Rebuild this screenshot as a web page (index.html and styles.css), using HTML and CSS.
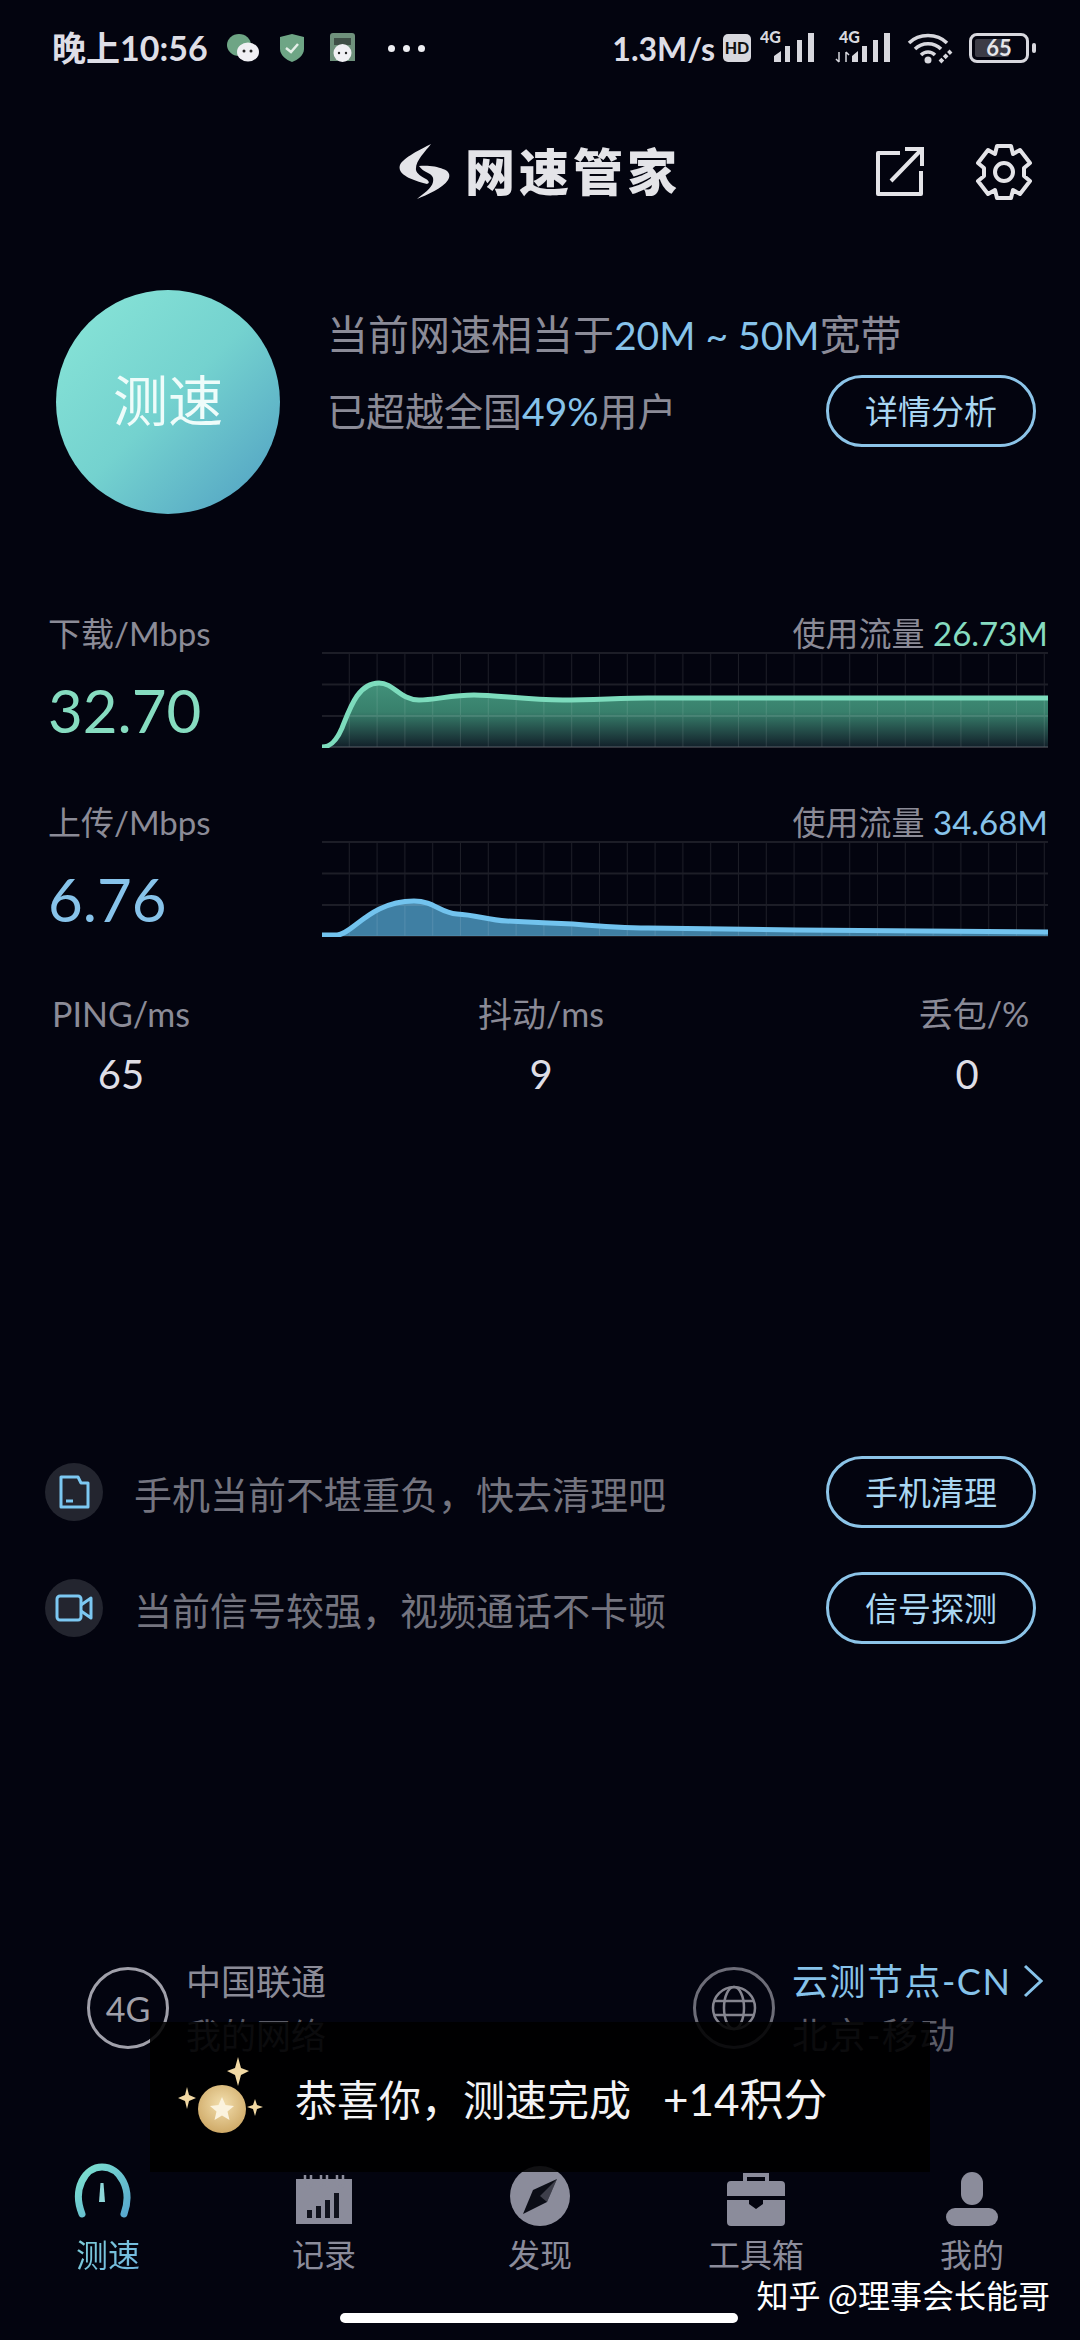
FILE: index.html
```html
<!DOCTYPE html>
<html>
<head>
    <title>网速管家</title>
    <link rel="stylesheet" href="styles.css">
</head>
<body>
<div class="phone">
    <!-- Status bar -->
    <div class="status-bar">
        <div class="status-left">
            <span class="time">晚上10:56</span>
            <svg class="st-wechat" width="34" height="30" viewBox="0 0 34 30">
                <ellipse cx="13" cy="12" rx="12" ry="11" fill="#6ea585"/>
                <ellipse cx="22" cy="19" rx="11" ry="9.500" fill="#f0f0f4"/>
                <circle cx="18" cy="18" r="1.500" fill="#222"/>
                <circle cx="25" cy="18" r="1.500" fill="#222"/>
            </svg>
            <svg class="st-shield" width="24" height="28" viewBox="0 0 24 28">
                <path d="M0 3 12 0 24 3V15C24 21 18 26 12 28 6 26 0 21 0 15Z" fill="#6ea585"/>
                <path d="M6 14 11 18 18 10" fill="none" stroke="#e4efe8" stroke-width="2.500"/>
            </svg>
            <svg class="st-face" width="25" height="30" viewBox="0 0 25 30">
                <path d="M3 0H22Q25 0 25 3V28H0V3Q0 0 3 0Z" fill="#6f917c"/>
                <rect x="4" y="5" width="17" height="7" fill="#3f4f47"/>
                <circle cx="12.500" cy="20" r="9" fill="#f0f0f4"/>
                <circle cx="9" cy="20" r="1.200" fill="#222"/>
                <circle cx="16" cy="20" r="1.200" fill="#222"/>
            </svg>
            <div class="dots"><i></i><i></i><i></i></div>
        </div>
        <div class="status-right">
            <span class="net-speed">1.3M/s</span>
            <span class="hd">HD</span>
            <svg width="55" height="44" viewBox="0 0 55 44" class="st-sig">
                <text x="0" y="17" class="sig-text">4G</text>
                <path d="M14 36V30L21 25V36ZM25 36V20H30V36ZM37 36V14H42V36ZM48 36V7H54V36Z" fill="#d8d8de"/>
            </svg>
            <svg width="56" height="44" viewBox="0 0 56 44" class="st-sig2">
                <text x="4" y="17" class="sig-text">4G</text>
                <path d="M4 36V26M1 33 4 36M11 36V26M14 29 11 26" stroke="#d8d8de" stroke-width="1.500" fill="none"/>
                <path d="M17 36V30L23 25V36ZM27 36V20H32V36ZM38 36V14H43V36ZM49 36V7H55V36Z" fill="#d8d8de"/>
            </svg>
            <svg width="48" height="32" viewBox="0 0 48 32" class="st-wifi">
                <path d="M2 11C12 1 30 1 40 11M8 17C15 10 27 10 34 17M14 23C18 19 24 19 28 23" fill="none" stroke="#d8d8de" stroke-width="3.500"/>
                <circle cx="21" cy="28" r="3.500" fill="#d8d8de"/>
                <path d="M33 30 44 19" stroke="#d8d8de" stroke-width="4" stroke-dasharray="4 2" fill="none"/>
            </svg>
            <div class="battery">
                <div class="battery-body"><span class="battery-fill"></span><span class="battery-num">65</span></div>
                <div class="battery-nub"></div>
            </div>
        </div>
    </div>

    <!-- Header -->
    <div class="header">
        <svg class="logo-mark" width="52" height="56" viewBox="0 0 52 56">
            <path d="M32 0C22 5 4 14 1 21 -1 27 4 31 10 34 17 37 23 39 28 40 31 39 30 37 27 35 22 32 18 30 17 26 16 17 26 8 32 0Z" fill="#e4e4e8"/>
            <path d="M20 22C27 21 38 22 44 25 50 27 52 31 49 36 44 44 28 51 18 55 24 50 33 44 34 38 35 33 33 31 29 29 25 27 22 25 20 22Z" fill="#e4e4e8"/>
        </svg>
        <span class="logo-text">网速管家</span>
        <svg class="share-icon" width="50" height="50" viewBox="0 0 50 50">
            <path d="M25 6H3V47H46V24" fill="none" stroke="#e4e4e8" stroke-width="4" stroke-linejoin="round"/>
            <path d="M16 34 46 3M30 2H47V19" fill="none" stroke="#e4e4e8" stroke-width="4"/>
        </svg>
        <svg class="gear-icon" width="58" height="58" viewBox="0 0 58 58">
            <path d="M22 3H36L38 11 45 7 55 20 49 25V33L55 38 45 51 38 47 36 55H22L20 47 13 51 3 38 9 33V25L3 20 13 7 20 11Z" fill="none" stroke="#e4e4e8" stroke-width="4" stroke-linejoin="round"/>
            <circle cx="29" cy="29" r="9" fill="none" stroke="#e4e4e8" stroke-width="4"/>
        </svg>
    </div>

    <!-- Speed test button and summary -->
    <div class="hero">
        <div class="test-btn">测速</div>
        <div class="hero-info">
            <div class="hero-line">当前网速相当于<span class="blue hero-range">20M ~ 50M</span>宽带</div>
            <div class="hero-row">
                <div class="hero-line hero-line-small">已超越全国<span class="blue">49%</span>用户</div>
                <div class="pill">详情分析</div>
            </div>
        </div>
    </div>

    <!-- Download -->
    <div class="speed-row">
        <div class="speed-left">
            <div class="speed-label">下载/Mbps</div>
            <div class="speed-value green">32.70</div>
        </div>
        <div class="speed-right">
            <div class="usage">使用流量 <span class="green">26.73M</span></div>
            <svg class="chart" width="726" height="96" viewBox="0 0 726 96">
                <defs>
                    <pattern id="gridA" width="27.800" height="31.500" patternUnits="userSpaceOnUse">
                        <path d="M27.800 0V31.500M0 1H27.800" fill="none" stroke="#fff" stroke-opacity="0.100" stroke-width="2"/>
                    </pattern>
                    <linearGradient id="fillGreen" x1="0" y1="0" x2="0" y2="1">
                        <stop offset="0" stop-color="#42917a"/>
                        <stop offset="0.450" stop-color="#38806c"/>
                        <stop offset="1" stop-color="#12202a"/>
                    </linearGradient>
                </defs>
                <path d="M0 95C8 95 14 90 20 76 28 56 36 31 57 31 72 31 78 48 97 48 112 48 130 43 152 43 175 43 205 48 241 48 270 48 300 46 326 46H726V95Z" fill="url(#fillGreen)"/>
                <rect width="726" height="96" fill="url(#gridA)"/>
                <path d="M0 95H726" stroke="#fff" stroke-opacity="0.100" stroke-width="2"/>
                <path d="M0 95C8 95 14 90 20 76 28 56 36 31 57 31 72 31 78 48 97 48 112 48 130 43 152 43 175 43 205 48 241 48 270 48 300 46 326 46H726" fill="none" stroke="#7ddcbd" stroke-width="5"/>
            </svg>
        </div>
    </div>

    <!-- Upload -->
    <div class="speed-row">
        <div class="speed-left">
            <div class="speed-label">上传/Mbps</div>
            <div class="speed-value blue">6.76</div>
        </div>
        <div class="speed-right">
            <div class="usage">使用流量 <span class="blue">34.68M</span></div>
            <svg class="chart" width="726" height="96" viewBox="0 0 726 96">
                <defs>
                    <pattern id="gridB" width="27.800" height="31.500" patternUnits="userSpaceOnUse">
                        <path d="M27.800 0V31.500M0 1H27.800" fill="none" stroke="#fff" stroke-opacity="0.100" stroke-width="2"/>
                    </pattern>
                </defs>
                <path d="M0 94H15C30 94 48 60 92 60 112 60 118 72 135 73 155 74 165 79 185 80 205 81 230 82 251 83 275 85 300 87 326 87L475 89 726 91V95H0Z" fill="#3f7fa3"/>
                <rect width="726" height="96" fill="url(#gridB)"/>
                <path d="M0 94H15C30 94 48 60 92 60 112 60 118 72 135 73 155 74 165 79 185 80 205 81 230 82 251 83 275 85 300 87 326 87L475 89 726 91" fill="none" stroke="#72c3ee" stroke-width="5"/>
            </svg>
        </div>
    </div>

    <!-- Ping, jitter, packet loss -->
    <div class="stats">
        <div class="stat"><div class="stat-label">PING/ms</div><div class="stat-value">65</div></div>
        <div class="stat stat-mid"><div class="stat-label">抖动/ms</div><div class="stat-value">9</div></div>
        <div class="stat"><div class="stat-label stat-label-right">丢包/%</div><div class="stat-value">0</div></div>
    </div>

    <!-- Tips -->
    <div class="tips">
        <div class="tip">
            <div class="tip-icon">
                <svg width="34" height="36" viewBox="0 0 34 36">
                    <path d="M4 3H21L24 9H31V33H4Z" fill="none" stroke="#7cc8f2" stroke-width="3" stroke-linejoin="round"/>
                    <path d="M9 27H16" stroke="#7cc8f2" stroke-width="3"/>
                </svg>
            </div>
            <div class="tip-text">手机当前不堪重负，快去清理吧</div>
            <div class="pill">手机清理</div>
        </div>
        <div class="tip">
            <div class="tip-icon">
                <svg width="38" height="30" viewBox="0 0 38 30">
                    <rect x="2" y="3" width="24" height="24" rx="3" fill="none" stroke="#7cc8f2" stroke-width="3"/>
                    <path d="M26 12 36 5V25L26 18" fill="none" stroke="#7cc8f2" stroke-width="3" stroke-linejoin="round"/>
                </svg>
            </div>
            <div class="tip-text">当前信号较强，视频通话不卡顿</div>
            <div class="pill">信号探测</div>
        </div>
    </div>

    <!-- Network and test node -->
    <div class="network">
        <div class="net-item net-mine">
            <div class="net-circle">4G</div>
            <div class="net-text">
                <div class="net-name">中国联通</div>
                <div class="net-sub">我的网络</div>
            </div>
        </div>
        <div class="net-item net-node">
            <div class="net-circle net-circle-dim">
                <svg width="46" height="46" viewBox="0 0 46 46">
                    <g fill="none" stroke="#85858f" stroke-width="2.500">
                        <circle cx="23" cy="23" r="21"/>
                        <ellipse cx="23" cy="23" rx="10" ry="21"/>
                        <path d="M3 16H43M3 30H43"/>
                    </g>
                </svg>
            </div>
            <div class="net-text">
                <div class="net-name blue net-wide">云测节点-CN
                    <svg class="net-arrow" width="20" height="34" viewBox="0 0 20 34"><path d="M2 2 18 17 2 32" fill="none" stroke="#87c3ea" stroke-width="3"/></svg>
                </div>
                <div class="net-sub net-wide">北京-移动</div>
            </div>
        </div>
    </div>

    <!-- Tab bar -->
    <div class="tabs">
        <div class="tab tab-active">
            <svg width="64" height="68" viewBox="0 0 64 68">
                <defs>
                    <linearGradient id="arcGrad" x1="0" y1="0" x2="1" y2="1">
                        <stop offset="0" stop-color="#7ee3cf"/>
                        <stop offset="1" stop-color="#58a9d0"/>
                    </linearGradient>
                </defs>
                <path d="M9 54C-1 29 12 7 29 7 47 7 60 29 51 54" fill="none" stroke="url(#arcGrad)" stroke-width="7" stroke-linecap="round"/>
                <path d="M26 42 27.500 23H30.500L32 42Z" fill="#8fd7d9"/>
            </svg>
            <span>测速</span>
        </div>
        <div class="tab">
            <svg width="64" height="68" viewBox="0 0 64 68">
                <path d="M4 19H60V64H4Z" fill="#8b8c9b"/>
                <path d="M13 15V24C13 28 19 28 19 24V15M29 15V24C29 28 35 28 35 24V15M45 15V24C45 28 51 28 51 24V15" fill="none" stroke="#8b8c9b" stroke-width="2.500"/>
                <path d="M15 58V50H20V58ZM24 58V46H29V58ZM33 58V40H38V58ZM42 58V33H47V58Z" fill="#10121c"/>
            </svg>
            <span>记录</span>
        </div>
        <div class="tab">
            <svg width="64" height="68" viewBox="0 0 64 68">
                <circle cx="32" cy="36" r="30" fill="#8b8c9b"/>
                <path d="M49 19 39 42 15 54 25 30Z" fill="#0b0d16"/>
                <path d="M49 19 39 42 32 36Z" fill="#8b8c9b" opacity="0.400"/>
            </svg>
            <span>发现</span>
        </div>
        <div class="tab">
            <svg width="64" height="68" viewBox="0 0 64 68">
                <path d="M21 22V15H43V22" fill="none" stroke="#8b8c9b" stroke-width="4"/>
                <path d="M7 21H57Q61 21 61 25V36H3V25Q3 21 7 21ZM3 40H25V44L32 49 39 44V40H61V62Q61 66 57 66H7Q3 66 3 62Z" fill="#8b8c9b"/>
            </svg>
            <span>工具箱</span>
        </div>
        <div class="tab">
            <svg width="64" height="68" viewBox="0 0 64 68">
                <rect x="21" y="12" width="22" height="33" rx="11" fill="#8b8c9b"/>
                <rect x="6" y="48" width="52" height="18" rx="9" fill="#8b8c9b"/>
            </svg>
            <span>我的</span>
        </div>
    </div>
    <div class="home-bar"></div>

    <!-- Toast -->
    <div class="toast">
        <svg class="toast-icon" width="92" height="80" viewBox="0 0 92 80">
            <defs>
                <radialGradient id="coin" cx="0.500" cy="0.400" r="0.700">
                    <stop offset="0" stop-color="#f3dfae"/>
                    <stop offset="1" stop-color="#c9a15c"/>
                </radialGradient>
            </defs>
            <path d="M62 0 65 11 73 14 65 18 62 29 59 18 51 14 59 11Z" fill="#f2d9a4"/>
            <path d="M11 30 13 38 20 41 13 44 11 52 9 44 2 41 9 38Z" fill="#f2d9a4"/>
            <path d="M79 42 81 48 87 50 81 52 79 59 77 52 71 50 77 48Z" fill="#f2d9a4"/>
            <circle cx="46" cy="52" r="24" fill="url(#coin)"/>
            <path d="M46 40 49.500 48 58 49 51.500 54.500 53.500 63 46 58.500 38.500 63 40.500 54.500 34 49 42.500 48Z" fill="#fbf3de"/>
        </svg>
        <span class="toast-text">恭喜你，测速完成<span class="toast-points">+14积分</span></span>
    </div>

    <div class="watermark">知乎 @理事会长能哥</div>
</div>
</body>
</html>
```

FILE: styles.css
```css
* {
    box-sizing: border-box;
}

body {
    margin: 0;
    padding: 0;
    background-color: #03040f;
    font-family: Lato, "Noto Sans CJK SC", sans-serif;
    color: #8b8b97;
}

.phone {
    position: relative;
    width: 1080px;
    height: 2340px;
    overflow: hidden;
}

.blue {
    color: #87c3ea;
}

.green {
    color: #86dcc0;
}

/* Status bar */
.status-bar {
    height: 96px;
    display: flex;
    justify-content: space-between;
    align-items: center;
    padding: 0 44px 0 52px;
    color: #dedee6;
}

.status-left,
.status-right {
    display: flex;
    align-items: center;
}

.time {
    font-size: 34px;
    font-weight: 700;
    line-height: 48px;
    width: 174px;
}

.st-shield {
    margin-left: 20px;
}

.st-face {
    margin-left: 26px;
}

.dots {
    display: flex;
    gap: 8px;
    margin-left: 33px;
}

.dots i {
    width: 7px;
    height: 7px;
    border-radius: 50%;
    background-color: #eeeef2;
}

.net-speed {
    font-size: 32px;
    font-weight: 700;
}

.hd {
    width: 28px;
    height: 28px;
    margin-left: 8px;
    border-radius: 5px;
    background-color: #d8d8de;
    color: #111;
    font-size: 16px;
    font-weight: 900;
    line-height: 28px;
    text-align: center;
}

.st-sig {
    margin-left: 9px;
}

.st-sig2 {
    margin-left: 20px;
}

.st-wifi {
    margin-left: 16px;
}

.sig-text {
    font-family: Lato, sans-serif;
    font-size: 16px;
    font-weight: 900;
    fill: #d8d8de;
}

.battery {
    display: flex;
    align-items: center;
    margin-left: 14px;
}

.battery-body {
    position: relative;
    width: 60px;
    height: 30px;
    border: 3px solid #d8d8de;
    border-radius: 8px;
}

.battery-fill {
    position: absolute;
    left: 3px;
    top: 3px;
    bottom: 3px;
    width: 34px;
    border-radius: 2px;
    background-color: #3c3c46;
}

.battery-num {
    position: absolute;
    left: 0;
    right: 0;
    top: 0;
    font-size: 22px;
    font-weight: 700;
    line-height: 24px;
    text-align: center;
    color: #e6e6ea;
}

.battery-nub {
    width: 4px;
    height: 10px;
    margin-left: 3px;
    border-radius: 2px;
    background-color: #d8d8de;
}

/* Header */
.header {
    position: relative;
    height: 152px;
    display: flex;
    align-items: center;
    padding-left: 399px;
}

.logo-text {
    margin-top: -6px;
    margin-left: 14px;
    font-family: "Noto Sans CJK SC", sans-serif;
    font-size: 50px;
    font-weight: 900;
    letter-spacing: 4px;
    color: #e4e4e8;
    line-height: 56px;
}

.share-icon {
    margin-left: 194px;
}

.gear-icon {
    margin-left: 50px;
}

/* Hero */
.hero {
    display: flex;
    margin-top: 42px;
    padding-left: 56px;
}

.test-btn {
    width: 224px;
    height: 224px;
    border-radius: 50%;
    background: linear-gradient(135deg, #8ae6d8 0%, #74d2cf 50%, #4f9dc2 100%);
    color: #eefcfa;
    font-family: "Noto Sans CJK SC", sans-serif;
    font-size: 55px;
    line-height: 214px;
    text-align: center;
}

.hero-info {
    width: 709px;
    margin-left: 47px;
    padding-top: 15px;
}

.hero-line {
    font-size: 41px;
    line-height: 60px;
}

.hero-range {
    font-size: 39px;
}

.hero-line-small {
    font-size: 39px;
}

.hero-row {
    display: flex;
    justify-content: space-between;
    align-items: center;
    margin-top: 10px;
}

.pill {
    width: 210px;
    height: 72px;
    border: 3px solid #8cc4e8;
    border-radius: 36px;
    color: #a9d6f2;
    font-size: 33px;
    line-height: 66px;
    text-align: center;
    flex-shrink: 0;
}

/* Speed rows */
.speed-row {
    display: flex;
    height: 138px;
    margin-bottom: 51px;
    padding-left: 48px;
}

.hero + .speed-row {
    margin-top: 95px;
}

.speed-left {
    width: 274px;
}

.speed-label {
    font-size: 33px;
    line-height: 48px;
}

.speed-value {
    margin-top: 13px;
    font-size: 60px;
    line-height: 80px;
}

.speed-right {
    width: 726px;
}

.usage {
    height: 43px;
    font-size: 33px;
    line-height: 48px;
    text-align: right;
}

.chart {
    display: block;
}

/* Stats */
.stats {
    display: flex;
    justify-content: space-between;
    padding: 3px 13px 0 21px;
}

.stat {
    width: 200px;
    text-align: center;
}

.stat-mid {
    margin-left: -6px;
}

.stat-label {
    font-size: 34px;
    line-height: 48px;
}

.stat-label-right {
    padding-left: 14px;
}

.stat-value {
    margin-top: 6px;
    color: #dedee6;
    font-size: 40px;
    line-height: 60px;
}

/* Tips */
.tips {
    display: flex;
    flex-direction: column;
    gap: 44px;
    margin-top: 352px;
    padding: 0 44px 0 45px;
}

.tip {
    display: flex;
    align-items: center;
    height: 72px;
}

.tip-icon {
    width: 58px;
    height: 58px;
    border-radius: 50%;
    background-color: #23252f;
    display: flex;
    align-items: center;
    justify-content: center;
}

.tip-text {
    flex: 1;
    margin-left: 31px;
    color: #74747f;
    font-size: 38px;
}

/* Network */
.network {
    display: flex;
    margin-top: 323px;
    padding-left: 87px;
    height: 82px;
}

.net-item {
    display: flex;
    align-items: center;
}

.net-mine {
    width: 606px;
}

.net-circle {
    width: 82px;
    height: 82px;
    border: 3px solid #a0a0aa;
    border-radius: 50%;
    display: flex;
    align-items: center;
    justify-content: center;
    color: #a0a0aa;
    font-size: 34px;
    flex-shrink: 0;
}

.net-circle-dim {
    border-color: #6d6d78;
}

.net-text {
    margin-left: 17px;
    white-space: nowrap;
}

.net-name {
    display: flex;
    align-items: center;
    gap: 12px;
    font-size: 35px;
    line-height: 48px;
}

.net-sub {
    margin-top: 6px;
    color: #5c5d68;
    font-size: 35px;
    line-height: 48px;
}

.net-wide {
    font-size: 36px;
    letter-spacing: 1.500px;
}

/* Tabs */
.tabs {
    display: grid;
    grid-template-columns: repeat(5, 216px);
    margin-top: 111px;
}

.tab {
    display: flex;
    flex-direction: column;
    align-items: center;
    font-size: 32px;
    line-height: 44px;
    color: #8b8c9b;
}

.tab svg {
    margin-bottom: 5px;
}

.tab-active svg {
    margin-left: -6px;
}

.tab-active span {
    background: linear-gradient(135deg, #7ecfd8, #70b5e0);
    -webkit-background-clip: text;
    background-clip: text;
    color: transparent;
}

.home-bar {
    width: 398px;
    height: 10px;
    margin: 36px 0 0 340px;
    border-radius: 5px;
    background-color: #fff;
}

/* Overlays */
.toast {
    position: absolute;
    left: 150px;
    top: 2022px;
    width: 780px;
    height: 150px;
    display: flex;
    align-items: center;
    padding-left: 26px;
    background-color: rgba(0, 0, 0, 0.88);
}

.toast-text {
    margin-left: 27px;
    color: #f2f2f4;
    font-size: 42px;
    white-space: nowrap;
}

.toast-points {
    margin-left: 32px;
    font-size: 44px;
}

.watermark {
    position: absolute;
    right: 30px;
    top: 2272px;
    color: #fff;
    font-family: "Noto Sans CJK SC", sans-serif;
    font-size: 32px;
    line-height: 44px;
}
```
